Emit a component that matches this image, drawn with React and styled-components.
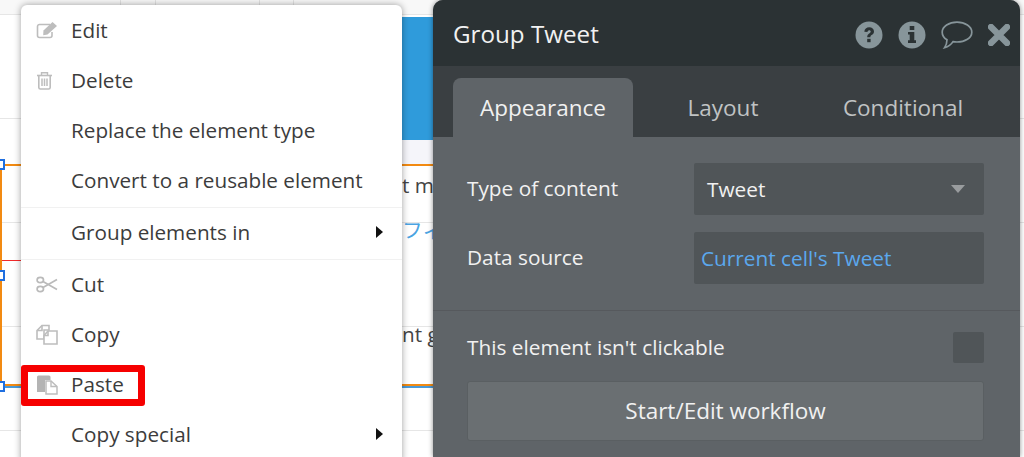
import React from "react";
import styled, { createGlobalStyle } from "styled-components";

const GlobalStyle = createGlobalStyle`
  html, body {
    margin: 0;
    padding: 0;
    background: #fff;
  }
  body {
    font-family: "Open Sans", "Noto Sans", sans-serif;
  }
`;

const menuGroups = [
  [
    { label: "Edit", icon: "edit" },
    { label: "Delete", icon: "trash" },
    { label: "Replace the element type" },
    { label: "Convert to a reusable element" },
  ],
  [{ label: "Group elements in", arrow: true }],
  [
    { label: "Cut", icon: "cut" },
    { label: "Copy", icon: "copy" },
    { label: "Paste", icon: "paste", marked: true },
    { label: "Copy special", arrow: true },
  ],
];

const EditIcon = () => (
  <svg width="22" height="18" viewBox="0 0 22 18" fill="none">
    <path d="M14 3.5H3.5A2 2 0 0 0 1.5 5.5V14.5A2 2 0 0 0 3.5 16.5H14A2 2 0 0 0 16 14.5V11" stroke="#bdbdbd" strokeWidth="1.6" />
    <path d="M7.5 9.5L16.5 1L21 5L11.5 13.5L7.2 14.2Z" fill="#bdbdbd" />
  </svg>
);

const TrashIcon = () => (
  <svg width="17" height="19" viewBox="0 0 17 19" fill="none" stroke="#bdbdbd">
    <path d="M1 4.5H16" strokeWidth="1.6" />
    <path d="M5.5 4V1.8H11.5V4" strokeWidth="1.4" />
    <path d="M2.8 4.5V16.5A1.6 1.6 0 0 0 4.4 18H12.6A1.6 1.6 0 0 0 14.2 16.5V4.5" strokeWidth="1.6" />
    <path d="M6 7.5V15M8.5 7.5V15M11 7.5V15" strokeWidth="1.5" />
  </svg>
);

const CutIcon = () => (
  <svg width="22" height="17" viewBox="0 0 22 17" fill="none" stroke="#bababa" strokeWidth="1.7">
    <ellipse cx="4.3" cy="4" rx="3.2" ry="2.6" />
    <ellipse cx="4.3" cy="13" rx="3.2" ry="2.6" />
    <path d="M7 5.5L21 13.5M7 11.5L21 3.5" />
  </svg>
);

const CopyIcon = () => (
  <svg width="22" height="21" viewBox="0 0 22 21" fill="none" stroke="#bdbdbd" strokeWidth="1.6">
    <path d="M6 1.5H13V6H8V15H1V6.5Z" />
    <path d="M6 1.5V6.5H1" />
    <path d="M12 7H21V20H8V11.5Z" fill="#fff" />
    <path d="M12 7V11.5H8" />
  </svg>
);

const PasteIcon = () => (
  <svg width="22" height="21" viewBox="0 0 22 21">
    <path d="M1 3A1.5 1.5 0 0 1 2.5 1.5H13A1.5 1.5 0 0 1 14.5 3V6H9V18H1Z" fill="#b4b4b4" />
    <path d="M10 7H15L21 12.5V20H10Z" fill="#fff" stroke="#bdbdbd" strokeWidth="1.5" />
    <path d="M15 7V12.5H21" fill="none" stroke="#bdbdbd" strokeWidth="1.4" />
  </svg>
);

const menuIcons = {
  edit: <EditIcon />,
  trash: <TrashIcon />,
  cut: <CutIcon />,
  copy: <CopyIcon />,
  paste: <PasteIcon />,
};

const HelpIcon = () => (
  <svg width="28" height="28" viewBox="0 0 28 28">
    <circle cx="14" cy="14" r="13.5" fill="#87959a" />
    <path d="M9.3 10.8C9.5 7.8 11.6 6.3 14.2 6.3C17 6.3 19 8 19 10.4C19 12.3 17.9 13.3 16.6 14.1C15.6 14.8 15.4 15.1 15.4 16.2H12.2C12.2 14.3 12.8 13.4 14.2 12.5C15.2 11.9 15.7 11.4 15.7 10.6C15.7 9.8 15.1 9.2 14.2 9.2C13.2 9.2 12.6 9.9 12.5 11Z" fill="#2b3234" />
    <rect x="12.2" y="17.8" width="3.4" height="3.4" fill="#2b3234" />
  </svg>
);

const InfoIcon = () => (
  <svg width="28" height="28" viewBox="0 0 28 28">
    <circle cx="14" cy="14" r="13.5" fill="#87959a" />
    <rect x="11.7" y="5" width="4.6" height="4" fill="#2b3234" />
    <path d="M10 11H16.3V19.2H18V22H10V19.2H11.7V13.6H10Z" fill="#2b3234" />
  </svg>
);

const ChatIcon = () => (
  <svg width="32" height="28" viewBox="0 0 32 28" fill="none">
    <path d="M16 1.2C24 1.2 30.8 5.5 30.8 11.2C30.8 17 24 21 16 21C14.5 21 13.3 20.9 12 20.6C10.5 23 7.8 25.5 3.6 26.6C5 24.5 6 22 6 18.8C3 17 1.2 14.3 1.2 11.2C1.2 5.5 8 1.2 16 1.2Z" stroke="#87959a" strokeWidth="1.7" />
  </svg>
);

const CloseIcon = () => (
  <svg width="22" height="22" viewBox="0 0 22 22">
    <path d="M3 3L19 19M19 3L3 19" stroke="#87959a" strokeWidth="6.4" strokeLinecap="round" />
  </svg>
);

const App = () => (
  <Page>
    <GlobalStyle />
    <Canvas>
      <TopRuler />
      <BlueHeader />
      <PaleStrip />
      <SelectedGroup>
        <HandleRail>
          <Handle />
          <Handle />
          <Handle />
        </HandleRail>
        <RedLine />
        <CanvasText $gap={5}>t mo</CanvasText>
        <CanvasLink $gap={16}>フィ</CanvasLink>
        <CanvasText $gap={77}>nt g</CanvasText>
      </SelectedGroup>
    </Canvas>

    <Menu>
      {menuGroups.map((group, i) => (
        <MenuGroup key={i}>
          {group.map((item) => (
            <MenuItem key={item.label}>
              <MenuIcon>{item.icon && menuIcons[item.icon]}</MenuIcon>
              {item.label}
              {item.arrow && <SubArrow />}
              {item.marked && <Marker />}
            </MenuItem>
          ))}
        </MenuGroup>
      ))}
    </Menu>

    <Panel>
      <PanelHeader>
        <PanelTitle>Group Tweet</PanelTitle>
        <HeaderIcons>
          <HelpIcon />
          <InfoIcon />
          <ChatIcon />
          <CloseIcon />
        </HeaderIcons>
      </PanelHeader>
      <TabBar>
        <Tab $active>Appearance</Tab>
        <Tab>Layout</Tab>
        <Tab>Conditional</Tab>
      </TabBar>
      <PanelBody>
        <FieldSection>
          <Field>
            <FieldLabel>Type of content</FieldLabel>
            <SelectBox>
              Tweet
              <Caret />
            </SelectBox>
          </Field>
          <Field>
            <FieldLabel>Data source</FieldLabel>
            <SourceBox>Current cell's Tweet</SourceBox>
          </Field>
        </FieldSection>
        <ClickSection>
          <CheckRow>
            <FieldLabel>This element isn't clickable</FieldLabel>
            <CheckBox />
          </CheckRow>
          <WorkflowButton>Start/Edit workflow</WorkflowButton>
        </ClickSection>
      </PanelBody>
    </Panel>
  </Page>
);

export default App;

const Page = styled.div`
  position: relative;
  width: 1024px;
  height: 457px;
  overflow: hidden;
  display: flex;
  align-items: flex-start;
  background: #fff;
`;

const Canvas = styled.div`
  position: absolute;
  inset: 0;
  background: linear-gradient(#e6e6e6 1px, transparent 1px) 0 14px / 100% 104px;
`;

const TopRuler = styled.div`
  height: 14px;
  margin-bottom: 3px;
  background:
    linear-gradient(#e2e2e2, #e2e2e2) 120px 0 / 1px 100% no-repeat,
    linear-gradient(#e2e2e2, #e2e2e2) 155px 0 / 1px 100% no-repeat,
    linear-gradient(#e2e2e2, #e2e2e2) 259px 0 / 1px 100% no-repeat,
    linear-gradient(#e2e2e2, #e2e2e2) 293px 0 / 1px 100% no-repeat,
    #f8f8f8;
`;

const BlueHeader = styled.div`
  width: 140px;
  height: 123px;
  margin-left: 300px;
  background: #2f9bdb;
`;

const PaleStrip = styled.div`
  width: 140px;
  height: 24px;
  margin-left: 300px;
  background: #f5f5fa;
`;

const SelectedGroup = styled.div`
  position: relative;
  width: 440px;
  height: 222px;
  box-sizing: border-box;
  display: flex;
  flex-direction: column;
  padding-left: 400px;
  border-top: 2px solid #f28a12;
  border-left: 2px solid #f28a12;
  border-bottom: 2px solid #f28a12;
  box-shadow: 0 2px 0 #4a9ad8;
`;

const HandleRail = styled.div`
  position: absolute;
  left: -8px;
  top: -7px;
  bottom: -8px;
  display: flex;
  flex-direction: column;
  justify-content: space-between;
`;

const Handle = styled.div`
  box-sizing: border-box;
  width: 11px;
  height: 11px;
  background: #fff;
  border: 2px solid #1f6fe0;
`;

const RedLine = styled.div`
  position: absolute;
  left: 0;
  top: 94px;
  width: 30px;
  height: 1px;
  background: #f22a2a;
`;

const CanvasText = styled.div`
  margin-top: ${(props) => props.$gap}px;
  font-size: 20.7px;
  line-height: 28px;
  color: #444;
  white-space: nowrap;
`;

const CanvasLink = styled(CanvasText)`
  color: #4aa3e2;
  font-family: "Noto Sans CJK JP", sans-serif;
`;

const Menu = styled.div`
  position: relative;
  box-sizing: border-box;
  flex: none;
  width: 381px;
  margin: 5px 0 0 21px;
  padding-top: 1px;
  height: 460px;
  background: #fff;
  border-radius: 6px;
  box-shadow: 0 0 7px rgba(0, 0, 0, 0.38);
`;

const MenuGroup = styled.div`
  & + & {
    margin-top: 1px;
    border-top: 1px solid #f1f1f1;
  }
`;

const MenuItem = styled.div`
  position: relative;
  box-sizing: border-box;
  height: 50px;
  display: flex;
  align-items: center;
  padding: 0 19px 2px 15px;
  font-size: 20.7px;
  color: #3c3c3c;
`;

const MenuIcon = styled.span`
  flex: none;
  width: 35px;
  display: flex;
  align-items: center;
`;

const SubArrow = styled.span`
  margin-left: auto;
  border-left: 7px solid #111;
  border-top: 6.5px solid transparent;
  border-bottom: 6.5px solid transparent;
`;

const Marker = styled.span`
  position: absolute;
  left: 0;
  top: 5px;
  width: 124px;
  height: 41px;
  box-sizing: border-box;
  border: 7px solid #f60000;
  border-radius: 3px;
`;

const Panel = styled.div`
  position: relative;
  flex: none;
  width: 587px;
  height: 457px;
  margin-left: 31px;
  background: #5f6468;
  border-radius: 10px 10px 0 0;
  box-shadow: 0 0 5px rgba(0, 0, 0, 0.45);
  overflow: hidden;
`;

const PanelHeader = styled.div`
  height: 66px;
  display: flex;
  align-items: center;
  justify-content: space-between;
  padding: 0 10px 0 20px;
  background: #2b3234;
`;

const PanelTitle = styled.div`
  font-size: 24.2px;
  color: #f1f1f1;
`;

const HeaderIcons = styled.div`
  display: flex;
  align-items: center;
  gap: 15px;
  margin-top: 3px;
`;

const TabBar = styled.div`
  height: 71px;
  display: flex;
  align-items: flex-end;
  padding-left: 20px;
  background: #3a3f42;
`;

const Tab = styled.div`
  box-sizing: border-box;
  width: 180px;
  height: 59px;
  padding-bottom: 1px;
  display: flex;
  align-items: center;
  justify-content: center;
  border-radius: 8px 8px 0 0;
  font-size: 22.5px;
  color: ${(props) => (props.$active ? "#f1f1f1" : "#c0c3c4")};
  background: ${(props) => (props.$active ? "#5f6468" : "transparent")};
`;

const PanelBody = styled.div`
  color: #f1f1f1;
  font-size: 20.8px;
`;

const FieldSection = styled.div`
  padding: 26px 36px 0 34px;
  height: 174px;
  box-sizing: border-box;
  border-bottom: 1px solid #56595d;
  display: flex;
  flex-direction: column;
  gap: 17px;
`;

const Field = styled.div`
  display: flex;
  align-items: center;
  justify-content: space-between;
`;

const FieldLabel = styled.div`
  padding-bottom: 2px;
  font-size: 20.8px;
`;

const SelectBox = styled.div`
  box-sizing: border-box;
  width: 290px;
  height: 52px;
  display: flex;
  align-items: center;
  justify-content: space-between;
  padding: 0 19px 0 13px;
  border-radius: 2px;
  background: #505558;
  font-size: 20.8px;
`;

const Caret = styled.span`
  border-top: 8px solid #999c9e;
  border-left: 7px solid transparent;
  border-right: 7px solid transparent;
`;

const SourceBox = styled(SelectBox)`
  padding-left: 7px;
  color: #5ba8ee;
`;

const ClickSection = styled.div`
  padding: 21px 36px 0 34px;
`;

const CheckRow = styled.div`
  height: 31px;
  display: flex;
  align-items: center;
  justify-content: space-between;
`;

const CheckBox = styled.div`
  width: 31px;
  height: 31px;
  border-radius: 2px;
  background: #505558;
`;

const WorkflowButton = styled.div`
  height: 60px;
  margin-top: 18px;
  padding-bottom: 1px;
  box-sizing: border-box;
  display: flex;
  align-items: center;
  justify-content: center;
  border: 1px solid #5a5f62;
  border-radius: 3px;
  background: #6a6f72;
  font-size: 22.5px;
`;
